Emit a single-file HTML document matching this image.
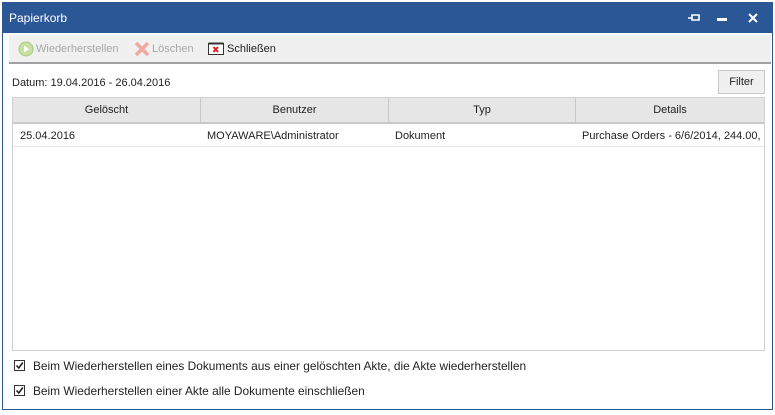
<!DOCTYPE html>
<html><head><style>
*{margin:0;padding:0;box-sizing:border-box}
body{width:775px;height:415px;background:#fff;font-family:"Liberation Sans",sans-serif;font-size:11px;color:#222;position:relative;overflow:hidden}
.win{position:absolute;left:2px;top:2px;width:771px;height:408px;border:1px solid #2b5797;background:#fff}
.title{position:absolute;left:0;top:0;right:0;height:30px;background:#2b5797;color:#fff;font-size:12px}
.title span{position:absolute;left:6px;top:8px}
.tb{position:absolute;left:6px;top:32px;width:762px;height:29px;background:#f0f0f0;border-bottom:2px solid #a0a0a0}
.tb div{position:absolute;top:8px}
.grid{position:absolute;left:9px;top:94px;width:753px;height:254px;border:1px solid #d0d0d0}
.hd{position:absolute;left:0;top:0;width:751px;height:26px;background:#e6e6e6;border-bottom:2px solid #c8c8c8}
.hd div{position:absolute;top:0;height:24px;line-height:24px;text-align:center;border-right:1px solid #c8c8c8}
.row{position:absolute;left:0;top:26px;width:751px;height:23px;border-bottom:1px solid #e4e4e4}
.row div{position:absolute;top:6px;white-space:nowrap}
.cb{position:absolute;left:11px;width:11px;height:11px;border:1px solid #333;background:#fff}
.cbl{position:absolute;left:30px;font-size:11.9px}
</style></head><body>
<div class="win">
 <div class="title"><span>Papierkorb</span>
  <svg style="position:absolute;left:683px;top:9px" width="16" height="12"><path d="M2 6h4M6 3h7v5H6z" stroke="#fff" stroke-width="1.6" fill="none"/></svg>
  <div style="position:absolute;left:714px;top:15px;width:10px;height:3px;background:#fff"></div>
  <svg style="position:absolute;left:745px;top:10px" width="10" height="10"><path d="M1 1L9 9M9 1L1 9" stroke="#fff" stroke-width="2"/></svg>
 </div>
 <div class="tb">
  <svg style="position:absolute;left:9px;top:6px" width="16" height="16"><circle cx="8" cy="8" r="7" fill="#c8e0a0" stroke="#a8c880"/><path d="M6 4.5L11 8 6 11.5z" fill="#fff"/></svg>
  <div style="left:27px;color:#a8a8a8">Wiederherstellen</div>
  <svg style="position:absolute;left:125px;top:6px" width="16" height="16"><path d="M2 2L14 14M14 2L2 14" stroke="#f0a8a0" stroke-width="3.5"/></svg>
  <div style="left:143px;color:#a8a8a8">Löschen</div>
  <svg style="position:absolute;left:199px;top:7px" width="16" height="13"><rect x="0.5" y="1.5" width="15" height="11" fill="#fff" stroke="#333"/><rect x="0.5" y="0.5" width="15" height="2" fill="#333"/><path d="M5.5 5L10 10M10 5L5.5 10" stroke="#e02020" stroke-width="2"/></svg>
  <div style="left:218px;color:#222">Schließen</div>
 </div>
 <div style="position:absolute;left:9px;top:74px">Datum: 19.04.2016 - 26.04.2016</div>
 <div style="position:absolute;left:715px;top:67px;width:47px;height:24px;border:1px solid #c8c8c8;background:#f0f0f0;text-align:center;line-height:22px">Filter</div>
 <div class="grid">
  <div class="hd">
   <div style="left:0;width:188px">Gelöscht</div>
   <div style="left:188px;width:188px">Benutzer</div>
   <div style="left:376px;width:187px">Typ</div>
   <div style="left:563px;width:188px;border-right:none">Details</div>
  </div>
  <div class="row">
   <div style="left:7px">25.04.2016</div>
   <div style="left:194px">MOYAWARE\Administrator</div>
   <div style="left:382px">Dokument</div>
   <div style="left:569px;width:182px;overflow:hidden">Purchase Orders - 6/6/2014, 244.00, P</div>
  </div>
 </div>
 <div class="cb" style="top:357px"><svg width="9" height="9" style="position:absolute;left:0;top:0"><path d="M1.5 4.5L3.8 7 7.8 1.5" stroke="#222" stroke-width="1.6" fill="none"/></svg></div>
 <div class="cbl" style="top:356px">Beim Wiederherstellen eines Dokuments aus einer gelöschten Akte, die Akte wiederherstellen</div>
 <div class="cb" style="top:382px"><svg width="9" height="9" style="position:absolute;left:0;top:0"><path d="M1.5 4.5L3.8 7 7.8 1.5" stroke="#222" stroke-width="1.6" fill="none"/></svg></div>
 <div class="cbl" style="top:381px">Beim Wiederherstellen einer Akte alle Dokumente einschließen</div>
</div>
</body></html>
